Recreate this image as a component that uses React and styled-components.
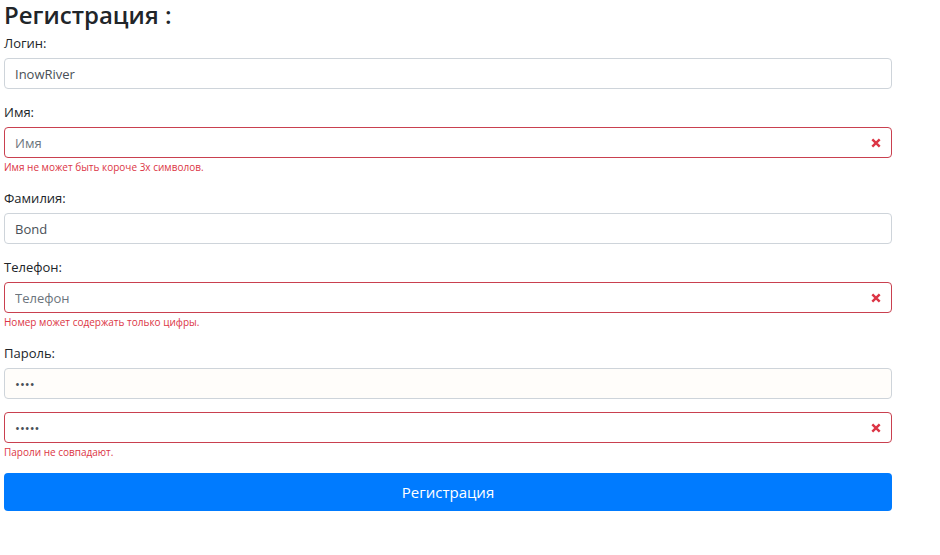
import styled, { createGlobalStyle } from 'styled-components';

const GlobalStyle = createGlobalStyle`
	body {
		margin: 0;
		background: #fff;
		font-family: "Open Sans", "Noto Sans", sans-serif;
		color: #212529;
	}
`;

const Page = styled.div`
	width: 888px;
	padding: 0 4px;
`;

const Title = styled.h3`
	margin: 0 0 3px;
	font-size: 24px;
	font-weight: 600;
	line-height: 30px;
	color: #212529;
`;

const Group = styled.div`
	display: flex;
	flex-direction: column;
	margin-bottom: 13px;
`;

const Label = styled.label`
	font-size: 13px;
	line-height: 20px;
	margin-bottom: 5px;
	color: #212529;
`;

const Field = styled.div`
	display: flex;
	align-items: center;
	height: 31px;
	box-sizing: border-box;
	border: 1px solid ${(p) => (p.$invalid ? '#c9404f' : '#ced4da')};
	border-radius: 4px;
	background: ${(p) => (p.$autofill ? '#fffdfa' : '#fff')};
	padding: 0 10px;
`;

const Input = styled.input`
	flex: 1;
	min-width: 0;
	border: 0;
	outline: 0;
	padding: 0;
	background: transparent;
	font-family: inherit;
	font-size: 13px;
	color: #495057;

	&::placeholder {
		color: #6c757d;
	}
`;

const ErrorText = styled.div`
	margin-top: 2px;
	font-size: 10px;
	line-height: 15px;
	color: #dc3545;
`;

const SubmitButton = styled.button`
	width: 100%;
	height: 38px;
	border: 0;
	border-radius: 4px;
	background: #007bff;
	color: #fff;
	font-family: inherit;
	font-size: 15px;
	cursor: pointer;
`;

const InvalidIcon = () => (
	<svg width="10" height="10" viewBox="0 0 10 10">
		<path d="M1.3 1.3 8.7 8.7M8.7 1.3 1.3 8.7" stroke="#dc3545" strokeWidth="2.4" />
	</svg>
);

const fields = [
	{ label: 'Логин:', value: 'InowRiver' },
	{ label: 'Имя:', placeholder: 'Имя', error: 'Имя не может быть короче 3х символов.' },
	{ label: 'Фамилия:', value: 'Bond' },
	{ label: 'Телефон:', placeholder: 'Телефон', error: 'Номер может содержать только цифры.' },
	{ label: 'Пароль:', value: '1234', type: 'password', autofill: true },
	{ value: '12345', type: 'password', error: 'Пароли не совпадают.' },
];

export default function App() {
	return (
		<>
			<GlobalStyle />
			<Page>
				<Title>Регистрация :</Title>
				{fields.map((f, i) => (
					<Group key={i}>
						{f.label && <Label>{f.label}</Label>}
						<Field $invalid={!!f.error} $autofill={f.autofill}>
							<Input
								type={f.type || 'text'}
								value={f.value || ''}
								placeholder={f.placeholder}
								readOnly
							/>
							{f.error && <InvalidIcon />}
						</Field>
						{f.error && <ErrorText>{f.error}</ErrorText>}
					</Group>
				))}
				<SubmitButton>Регистрация</SubmitButton>
			</Page>
		</>
	);
}
